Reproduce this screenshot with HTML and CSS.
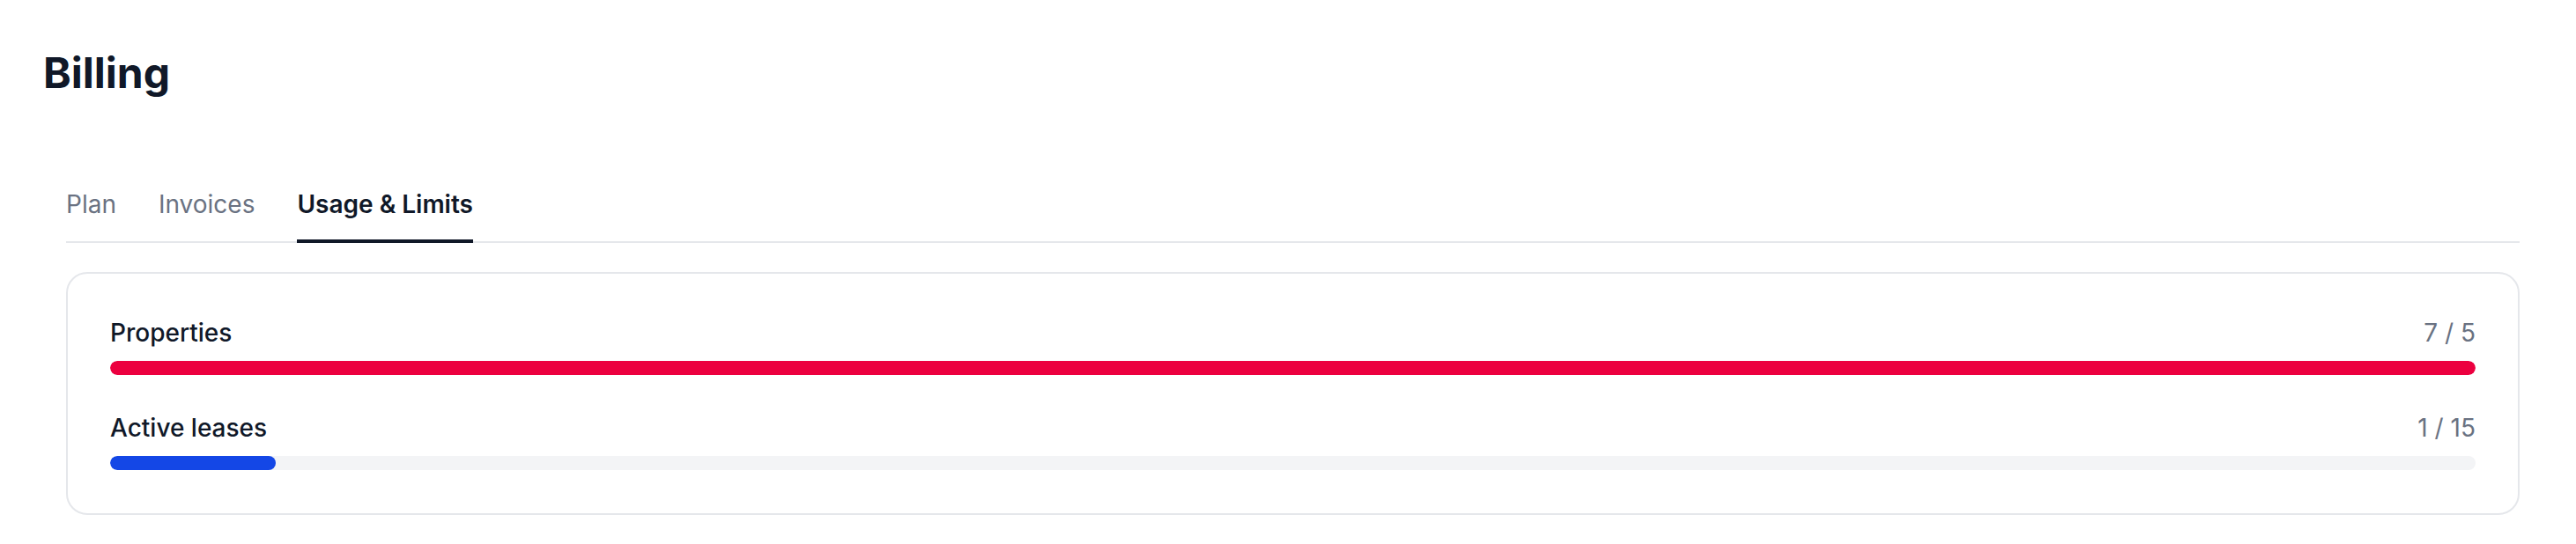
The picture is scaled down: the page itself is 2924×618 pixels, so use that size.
FILE: index.html
```html
<!DOCTYPE html>
<html lang="en">
<head>
    <meta charset="UTF-8">
    <meta name="viewport" content="width=device-width, initial-scale=1.0">
    <title>Billing</title>
    <link rel="stylesheet" href="styles.css">
</head>
<body>
    <div class="page">
        <h1 class="title">Billing</h1>

        <div class="content">
            <nav class="tabs">
                <a class="tab">Plan</a>
                <a class="tab">Invoices</a>
                <a class="tab active">Usage &amp; Limits</a>
            </nav>

            <div class="card">
                <div class="usage">
                    <div class="usage-head">
                        <span class="usage-label">Properties</span>
                        <span class="usage-count">7 / 5</span>
                    </div>
                    <div class="bar">
                        <div class="bar-fill over" style="width: 100%;"></div>
                    </div>
                </div>

                <div class="usage">
                    <div class="usage-head">
                        <span class="usage-label">Active leases</span>
                        <span class="usage-count">1 / 15</span>
                    </div>
                    <div class="bar">
                        <div class="bar-fill" style="width: 7%;"></div>
                    </div>
                </div>
            </div>
        </div>
    </div>
</body>
</html>
```

FILE: styles.css
```css
body {
    margin: 0;
    background: #ffffff;
    font-family: Inter, "Noto Sans", sans-serif;
    color: #101828;
}

.page {
    padding: 51px 64px 0 49px;
}

.title {
    margin: 0;
    font-size: 48px;
    line-height: 64px;
    font-weight: 700;
    color: #101828;
}

.content {
    margin: 97px 0 0 26px;
}

/* Tabs */
.tabs {
    display: flex;
    gap: 48px;
    border-bottom: 2px solid #e5e7eb;
}

.tab {
    font-size: 28px;
    line-height: 40px;
    color: #6a7282;
    padding-bottom: 20px;
    border-bottom: 4px solid transparent;
    margin-bottom: -2px;
    cursor: pointer;
}

.tab.active {
    color: #101828;
    font-weight: 600;
    border-bottom-color: #101828;
}

/* Card */
.card {
    margin-top: 33px;
    border: 2px solid #e5e7eb;
    border-radius: 24px;
    padding: 47px 48px 49px;
    display: flex;
    flex-direction: column;
    gap: 40px;
}

.usage-head {
    display: flex;
    justify-content: space-between;
    font-size: 28px;
    line-height: 40px;
    margin-bottom: 12px;
}

.usage-label {
    font-weight: 500;
    color: #101828;
}

.usage-count {
    color: #6a7282;
}

.bar {
    height: 16px;
    background: #f3f4f6;
    border-radius: 999px;
    overflow: hidden;
}

.bar-fill {
    height: 100%;
    background: #1447e6;
    border-radius: 999px;
}

.bar-fill.over {
    background: #ec003f;
}
```
